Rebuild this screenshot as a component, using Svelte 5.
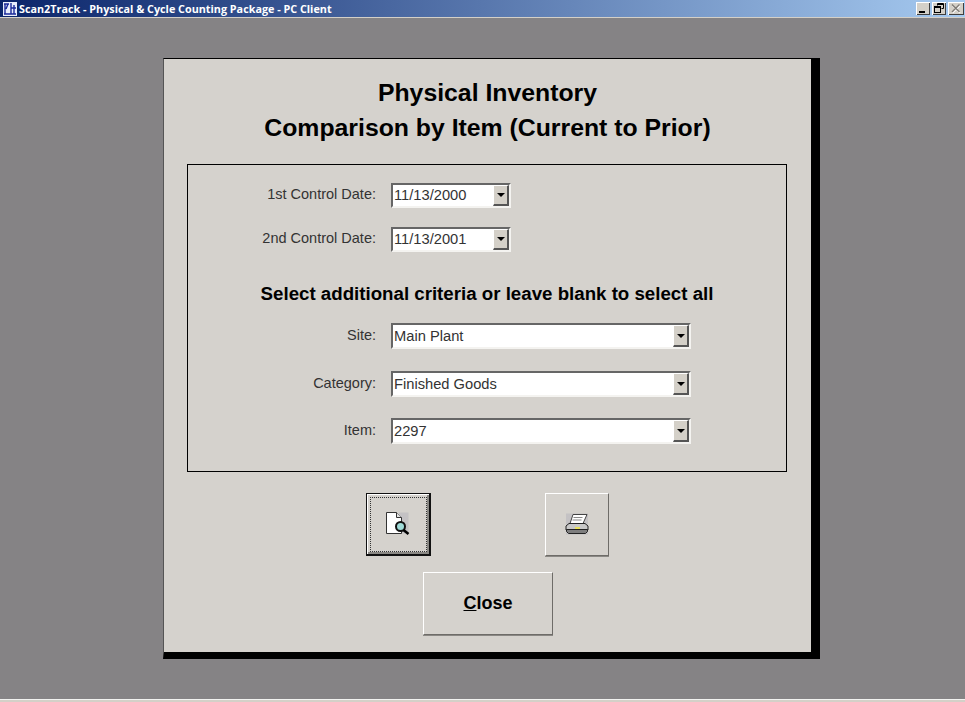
<script>
  const dates = [
    { label: '1st Control Date:', value: '11/13/2000' },
    { label: '2nd Control Date:', value: '11/13/2001' }
  ];
  const criteria = [
    { label: 'Site:', value: 'Main Plant' },
    { label: 'Category:', value: 'Finished Goods' },
    { label: 'Item:', value: '2297' }
  ];
</script>

<div class="app">
  <header class="titlebar">
    <svg class="appicon" width="16" height="16" viewBox="0 0 16 16">
      <rect x="1" y="1" width="14" height="14" fill="#e8eefc" />
      <path d="M2 3h5M3 3v10M6 3l-2 5M9 2v11M9 7h5M12 4v9M2 13h12" stroke="#1a2a9a" stroke-width="1.4" fill="none" />
    </svg>
    <span class="apptitle">Scan2Track - Physical &amp; Cycle Counting Package - PC Client</span>
    <div class="winbtns">
      <div class="winbtn">
        <svg width="14" height="13" viewBox="0 0 14 13"><rect x="3" y="9" width="6" height="2" fill="#000" /></svg>
      </div>
      <div class="winbtn">
        <svg width="14" height="13" viewBox="0 0 14 13">
          <path d="M5.500 3.500V1.500h6v5h-2M5 2.500h6" stroke="#000" fill="none" />
          <rect x="2.500" y="4.500" width="6" height="6" fill="#d4d0c8" stroke="#000" />
          <path d="M2 5.500h7" stroke="#000" />
        </svg>
      </div>
      <div class="winbtn closebtn">
        <svg width="16" height="13" viewBox="0 0 16 13">
          <path d="M4.500 3.500l7.500 7.500M12 3.500l-7.500 7.500" stroke="#fff" stroke-width="1.400" />
          <path d="M4 2.500l7.500 7.500M11.500 2.500l-7.500 7.500" stroke="#7d7973" stroke-width="1.400" />
        </svg>
      </div>
    </div>
  </header>

  <main class="desktop">
    <section class="panel">
      <h1>Physical Inventory</h1>
      <h2>Comparison by Item (Current to Prior)</h2>

      <div class="frame">
        {#each dates as d}
          <div class="row daterow">
            <span class="lbl">{d.label}</span>
            <div class="combo short">
              <span class="val">{d.value}</span>
              <span class="drop"><i></i></span>
            </div>
          </div>
        {/each}

        <p class="hint">Select additional criteria or leave blank to select all</p>

        {#each criteria as c}
          <div class="row critrow">
            <span class="lbl">{c.label}</span>
            <div class="combo long">
              <span class="val">{c.value}</span>
              <span class="drop"><i></i></span>
            </div>
          </div>
        {/each}
      </div>

      <div class="iconbtns">
        <button class="btn icon focused" aria-label="Preview">
          <span class="focusring">
            <svg width="26" height="26" viewBox="0 0 26 26">
              <rect x="14" y="1.500" width="9.500" height="21" fill="#c4c2c4" />
              <path d="M1.500 1.500h10l5 5v16h-15z" fill="#fff" stroke="#333" />
              <path d="M11.500 1.500v5h5" fill="#e4e4e4" stroke="#333" />
              <circle cx="15.500" cy="15.500" r="4.500" fill="#9fdbd8" stroke="#111" stroke-width="2" />
              <path d="M18.500 19l5 4" stroke="#000" stroke-width="2.600" />
            </svg>
          </span>
        </button>
        <button class="btn icon" aria-label="Print">
          <svg width="26" height="26" viewBox="0 0 26 26">
            <rect x="2" y="1.500" width="22" height="21" fill="#c4c2c4" />
            <path d="M9 2.500h14l-4 9H6z" fill="#fff" stroke="#444" />
            <path d="M9.500 5.500h9M8.500 8h9" stroke="#888" />
            <path d="M5 11.500h16l3 2.500v4H2v-4z" fill="#c8c8c8" stroke="#222" />
            <path d="M2.500 17.500h21v2l-2 2h-17l-2-2z" fill="#7e7e7e" stroke="#222" />
            <rect x="11" y="15" width="5" height="2" fill="#e8e060" />
          </svg>
        </button>
      </div>

      <button class="btn closeaction"><u>C</u>lose</button>
    </section>
  </main>

  <footer class="statusbar"></footer>
</div>

<style>
  :global(body) {
    margin: 0;
    background: #858385;
  }

  .app {
    width: 965px;
    height: 702px;
    display: flex;
    flex-direction: column;
    overflow: hidden;
    font-family: "Liberation Sans", Arial, sans-serif;
  }

  .titlebar {
    height: 17px;
    flex: none;
    display: flex;
    align-items: center;
    background: linear-gradient(90deg, #0a246a, #a6caf0);
    border-bottom: 1px solid #d4d0c8;
  }

  .appicon {
    margin-left: 2px;
    flex: none;
  }

  .apptitle {
    margin-left: 1px;
    color: #fff;
    font: bold 10.800px "Open Sans", sans-serif;
    white-space: nowrap;
  }

  .winbtns {
    margin-left: auto;
    margin-right: 1px;
    display: flex;
    gap: 2px;
  }

  .winbtn {
    width: 14px;
    height: 13px;
    background: #d4d0c8;
    box-shadow: inset 1px 1px 0 #fff, inset -1px -1px 0 #404040;
  }

  .closebtn {
    width: 16px;
  }

  .winbtn svg {
    display: block;
  }

  .desktop {
    flex: 1;
    background: #858385;
    padding: 40px 0 0 163px;
  }

  .statusbar {
    height: 3px;
    flex: none;
    box-sizing: border-box;
    background: #d4d0c8;
    border-top: 1px solid #f2f2f0;
  }

  .panel {
    box-sizing: border-box;
    width: 657px;
    height: 601px;
    background: #d5d2cd;
    border-style: solid;
    border-color: #000;
    border-width: 1px 9px 7px 1px;
    border-left-color: #555;
    padding-top: 16px;
    text-align: center;
    color: #000;
  }

  h1, h2 {
    margin: 0;
    font-size: 24.800px;
    line-height: 36px;
    font-weight: bold;
  }

  h2 {
    line-height: 34px;
  }

  .frame {
    box-sizing: border-box;
    width: 600px;
    height: 308px;
    margin: 19px 0 0 23px;
    border: 1px solid #000;
    padding-top: 18px;
  }

  .row {
    display: flex;
    align-items: center;
  }

  .daterow {
    height: 25px;
    margin-bottom: 19px;
  }

  .critrow {
    height: 26px;
    margin-bottom: 21px;
  }

  .critrow:nth-of-type(3) {
    margin-bottom: 22px;
  }

  .lbl {
    width: 188px;
    text-align: right;
    margin-right: 15px;
    padding-bottom: 3px;
    font-size: 14.500px;
    color: #333;
  }

  .combo {
    box-sizing: border-box;
    height: 100%;
    display: flex;
    align-items: center;
    background: #fff;
    border: 2px solid;
    border-color: #666 #f4f3f0 #f4f3f0 #666;
  }

  .short {
    width: 120px;
  }

  .long {
    width: 300px;
  }

  .val {
    flex: 1;
    text-align: left;
    padding: 0 0 1px 1px;
    font-size: 14.700px;
    color: #333;
  }

  .drop {
    box-sizing: border-box;
    width: 16px;
    height: 100%;
    display: flex;
    align-items: center;
    justify-content: center;
    background: #d4d0c8;
    border-style: solid;
    border-width: 1px 2px 2px 1px;
    border-color: #fff #555 #555 #fff;
  }

  .drop i {
    border-style: solid;
    border-width: 4px 4px 0;
    border-color: #000 transparent transparent;
  }

  .hint {
    margin: 32px 0 19px;
    height: 20px;
    font-size: 18.700px;
    line-height: 20px;
    font-weight: bold;
  }

  .iconbtns {
    display: flex;
    justify-content: center;
    gap: 114px;
    margin-top: 21px;
  }

  .btn {
    box-sizing: border-box;
    padding: 0;
    background: #d5d2cd;
    border: 1px solid;
    border-color: #fff #6e6c68 #6e6c68 #fff;
    box-shadow: 0 1px 0 #8a8884;
    color: #000;
    font-family: inherit;
    display: flex;
    align-items: center;
    justify-content: center;
  }

  .icon {
    width: 64px;
    height: 63px;
  }

  .icon svg {
    display: block;
  }

  .focused {
    width: 65px;
    border-style: solid;
    border-color: #111;
    border-width: 1px 2px 2px 1px;
    box-shadow: inset 1px 1px 0 #fff, inset -2px -2px 0 #8a8884;
  }

  .focusring {
    box-sizing: border-box;
    width: 57px;
    height: 55px;
    display: flex;
    align-items: center;
    justify-content: center;
    border: 1px dotted #333;
  }

  .closeaction {
    width: 130px;
    height: 63px;
    margin: 16px 0 0 259px;
    font-size: 18px;
    font-weight: bold;
  }
</style>
